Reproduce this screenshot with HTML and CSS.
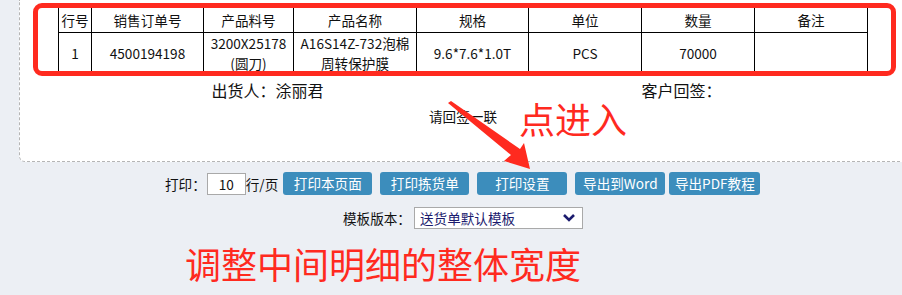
FILE: index.html
```html
<!DOCTYPE html>
<html lang="zh-CN">
<head>
  <meta charset="UTF-8">
  <title>送货单打印</title>
  <link rel="stylesheet" href="styles.css">
</head>
<body>
  <div class="sheet">
    <table class="detail">
      <colgroup>
        <col style="width:33px"><col style="width:112px"><col style="width:90px"><col style="width:123px">
        <col style="width:112px"><col style="width:113px"><col style="width:113px"><col style="width:113px">
      </colgroup>
      <tr class="head">
        <td>行号</td><td>销售订单号</td><td>产品料号</td><td>产品名称</td>
        <td>规格</td><td>单位</td><td>数量</td><td>备注</td>
      </tr>
      <tr class="row">
        <td>1</td><td>4500194198</td><td>3200X25178<br>(圆刀)</td><td>A16S14Z-732泡棉<br>周转保护膜</td>
        <td>9.6*7.6*1.0T</td><td>PCS</td><td>70000</td><td></td>
      </tr>
    </table>
    <div class="mark-box"></div>

    <div class="signs">
      <span>出货人：涂丽君</span>
      <span>客户回签：</span>
    </div>
    <div class="copy-note">请回签一联</div>
  </div>

  <div class="toolbar">
    <span class="label">打印：</span>
    <span class="rows-input">10</span>
    <span class="label">行/页</span>
    <button class="btn btn-wide">打印本页面</button>
    <button class="btn btn-wide">打印拣货单</button>
    <button class="btn btn-set">打印设置</button>
    <button class="btn btn-word">导出到Word</button>
    <button class="btn btn-pdf">导出PDF教程</button>
  </div>

  <div class="tpl-row">
    <span class="label">模板版本：</span>
    <div class="fake-select">
      <span>送货单默认模板</span>
      <svg width="14" height="10" viewBox="0 0 14 10"><path d="M2 2 L7 7 L12 2" fill="none" stroke="#1b1b6e" stroke-width="2.6"/></svg>
    </div>
  </div>

  <div class="hint-big">调整中间明细的整体宽度</div>

  <div class="hint-click">点进入</div>
  <svg class="arrow" width="110" height="90" viewBox="0 0 110 90">
    <polygon points="4,2 7,0 76,48 80,42 86,68 60,60 67,54" fill="#ff2a1f"/>
  </svg>
</body>
</html>
```

FILE: styles.css
```css
html, body {
  margin: 0;
  padding: 0;
}
body {
  position: relative;
  width: 902px;
  height: 295px;
  overflow: hidden;
  background: #eceff4;
  font-family: "Noto Sans CJK SC", "Liberation Sans", sans-serif;
  color: #111;
}
.sheet {
  position: relative;
  margin-left: 19px;
  width: 900px;
  height: 160px;
  background: #fff;
  border: 1px dashed #b5b5b5;
  border-top: none;
  border-radius: 0 0 0 6px;
  box-sizing: content-box;
  padding-top: 1px;
}
.detail {
  margin: 6px 0 0 38px;
  border-collapse: collapse;
  table-layout: fixed;
  width: 809px;
  font-size: 13.6px;
}
.detail td {
  border: 1px solid #000;
  text-align: center;
  padding: 0;
  line-height: 20px;
}
.detail .head td {
  height: 24px;
}
.detail .row td {
  height: 39px;
}
.mark-box {
  position: absolute;
  left: 13px;
  top: 3px;
  width: 863px;
  height: 73px;
  border: 5px solid #ff2a1f;
  border-radius: 9px;
  box-sizing: border-box;
}
.signs {
  display: grid;
  grid-template-columns: 409px 419px;
  margin: 5px 0 0 43px;
  font-size: 16px;
  line-height: 22px;
}
.signs span {
  text-align: center;
}
.copy-note {
  margin-top: 6px;
  width: 886px;
  text-align: center;
  font-size: 13.6px;
  line-height: 18px;
}
.toolbar {
  display: flex;
  align-items: center;
  margin: 10px 0 0 165px;
  height: 23px;
  font-size: 13.6px;
}
.label {
  white-space: nowrap;
}
.rows-input {
  box-sizing: border-box;
  width: 39px;
  height: 22px;
  margin-left: 1px;
  border: 1px solid #a9a9a9;
  background: #fff;
  text-align: center;
  line-height: 20px;
}
.btn {
  box-sizing: border-box;
  height: 23px;
  margin-left: 8px;
  padding: 0;
  background: #3c8dbc;
  color: #fff;
  border: none;
  border-radius: 3px;
  font-family: inherit;
  font-size: 13.6px;
  line-height: 23px;
  text-align: center;
  white-space: nowrap;
}
.toolbar .label + .btn {
  margin-left: 5px;
}
.btn-wide {
  width: 89px;
}
.btn-set {
  width: 90px;
}
.btn-word {
  width: 90px;
}
.btn-pdf {
  width: 91px;
  margin-left: 4px;
}
.tpl-row {
  display: flex;
  align-items: center;
  margin: 12px 0 0 343px;
  height: 22px;
  font-size: 13.6px;
}
.fake-select {
  box-sizing: border-box;
  display: flex;
  align-items: center;
  justify-content: space-between;
  width: 169px;
  height: 22px;
  margin-left: 3px;
  padding: 0 6px 0 5px;
  background: #fff;
  border: 1px solid #a9a9a9;
  color: #1b1b6e;
}
.hint-big {
  margin: 12px 0 0 185px;
  font-size: 36px;
  line-height: 44px;
  color: #ff2a1f;
}
.hint-click {
  position: absolute;
  left: 519px;
  top: 96px;
  font-size: 36px;
  line-height: 44px;
  color: #ff2a1f;
}
.arrow {
  position: absolute;
  left: 444px;
  top: 101px;
}
```
